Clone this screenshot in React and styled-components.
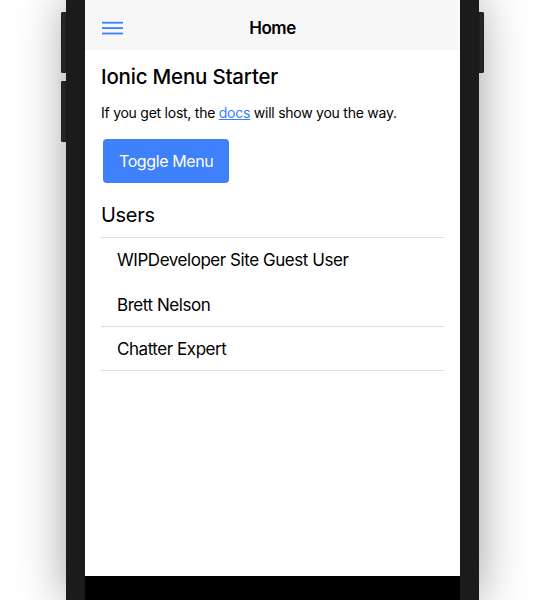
import React from 'react';
import styled, { createGlobalStyle } from 'styled-components';

const GlobalStyle = createGlobalStyle`
  html, body {
    margin: 0;
    padding: 0;
    background: #ffffff;
    overflow: hidden;
  }
  body {
    font-family: Inter, "Liberation Sans", Arial, sans-serif;
    color: #000;
  }
`;

const Stage = styled.div`
  display: flex;
  justify-content: center;
  height: 600px;
  overflow: hidden;
`;

const Phone = styled.div`
  position: relative;
  width: 375px;
  height: 600px;
  border-left: 19px solid #1b1b1b;
  border-right: 19px solid #1b1b1b;
  box-shadow: 0 0 44px rgba(0, 0, 0, 0.38);
  display: flex;
  flex-direction: column;
  background: #fff;
`;

const SideButton = styled.span`
  position: absolute;
  top: ${(p) => p.top}px;
  ${(p) => (p.right ? 'right: -24px;' : 'left: -24px;')}
  width: 5px;
  height: 61px;
  background: #262626;
  border-radius: ${(p) => (p.right ? '0 2px 2px 0' : '2px 0 0 2px')};
  box-shadow: inset 0 0 0 1px #1e1e1e;
`;

const Toolbar = styled.header`
  position: relative;
  height: 50px;
  flex-shrink: 0;
  background: #f7f7f7;
  display: flex;
  align-items: center;
  justify-content: center;
`;

const MenuButton = styled.button`
  position: absolute;
  left: 17px;
  top: 21px;
  padding: 0;
  border: 0;
  background: none;
  display: flex;
`;

const Title = styled.h1`
  margin: 0;
  font-size: 17px;
  font-weight: 600;
  letter-spacing: -0.5px;
  padding-top: 6px;
`;

const Content = styled.main`
  flex: 1;
  padding: 0 16px;
`;

const Heading = styled.h2`
  margin: 14px 0 0;
  font-size: 20.5px;
  font-weight: 500;
  letter-spacing: -0.2px;
  line-height: 26px;
`;

const Paragraph = styled.p`
  margin: 13px 0 0;
  font-size: 14px;
  line-height: 20px;
  letter-spacing: -0.25px;
`;

const DocsLink = styled.a`
  color: #3880ff;
  text-decoration: underline;
`;

const PrimaryButton = styled.button`
  margin: 16px 2px 0;
  height: 44px;
  padding: 0 16px;
  border: 0;
  border-radius: 4px;
  background: #3f80fb;
  color: #fff;
  font-family: inherit;
  font-size: 16px;
  letter-spacing: -0.4px;
  cursor: pointer;
`;

const SectionTitle = styled.h3`
  margin: 19px 0 0;
  font-size: 20px;
  font-weight: 400;
  letter-spacing: -0.3px;
  line-height: 26px;
`;

const UserList = styled.ul`
  list-style: none;
  margin: 9px 0 0;
  padding: 0;
  border-top: 1px solid #dcdcdc;
`;

const UserItem = styled.li`
  height: ${(p) => (p.first ? 45 : 44)}px;
  box-sizing: border-box;
  padding-left: 16px;
  display: flex;
  align-items: center;
  font-size: 17px;
  letter-spacing: -0.45px;
  border-bottom: 1px solid ${(p) => (p.divider ? '#dcdcdc' : 'transparent')};
`;

const HomeBar = styled.div`
  height: 24px;
  flex-shrink: 0;
  background: #000;
`;

function MenuIcon() {
  return (
    <svg width="21" height="14" viewBox="0 0 21 14">
      <rect x="0" y="0.8" width="21" height="1.8" fill="#3880ff" />
      <rect x="0" y="6.2" width="21" height="1.8" fill="#3880ff" />
      <rect x="0" y="11.6" width="21" height="1.8" fill="#3880ff" />
    </svg>
  );
}

const users = [
  { name: 'WIPDeveloper Site Guest User', divider: false },
  { name: 'Brett Nelson', divider: true },
  { name: 'Chatter Expert', divider: true },
];

export default function App() {
  return (
    <>
      <GlobalStyle />
      <Stage>
        <Phone>
          <SideButton top={12} />
          <SideButton top={81} />
          <SideButton top={12} right />
          <Toolbar>
            <MenuButton aria-label="menu">
              <MenuIcon />
            </MenuButton>
            <Title>Home</Title>
          </Toolbar>
          <Content>
            <Heading>Ionic Menu Starter</Heading>
            <Paragraph>
              If you get lost, the <DocsLink href="#">docs</DocsLink> will show you the way.
            </Paragraph>
            <PrimaryButton>Toggle Menu</PrimaryButton>
            <SectionTitle>Users</SectionTitle>
            <UserList>
              {users.map((u, i) => (
                <UserItem key={u.name} first={i === 0} divider={u.divider}>
                  {u.name}
                </UserItem>
              ))}
            </UserList>
          </Content>
          <HomeBar />
        </Phone>
      </Stage>
    </>
  );
}
